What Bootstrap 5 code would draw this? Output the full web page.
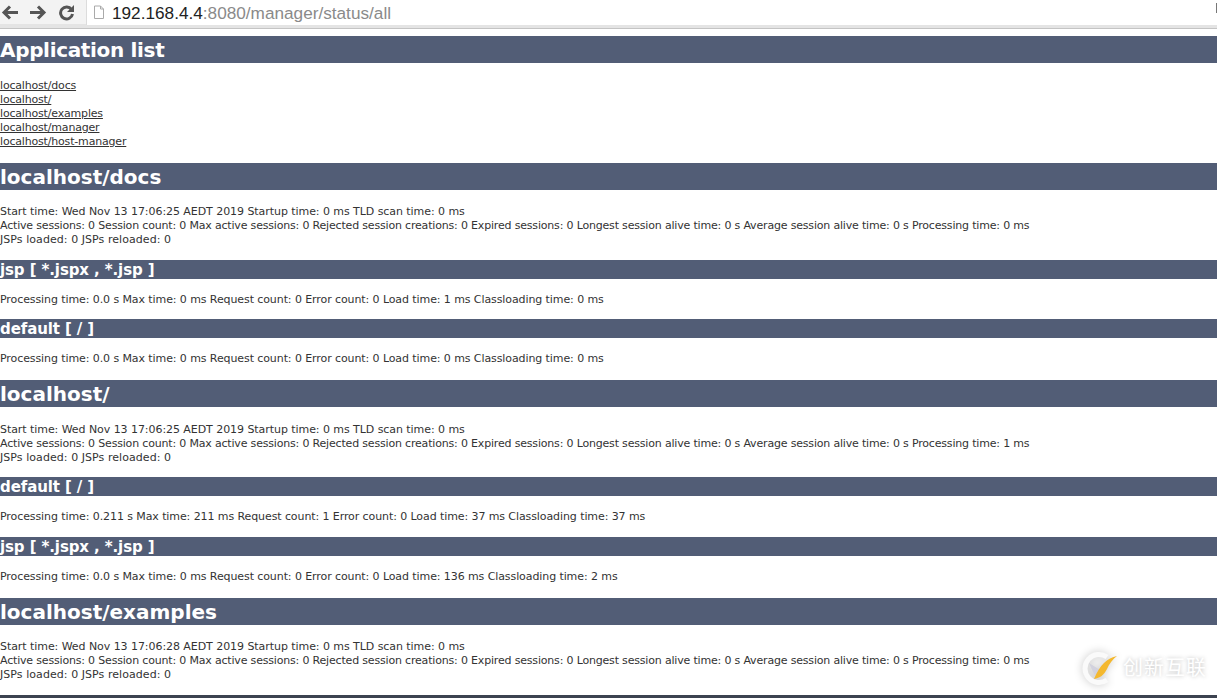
<!DOCTYPE html>
<html lang="en">
<head>
    <meta charset="UTF-8">
    <title>/manager</title>
    <link href="https://cdn.jsdelivr.net/npm/bootstrap@5.3.3/dist/css/bootstrap.min.css" rel="stylesheet">
    <style>
        html, body { height: 698px; overflow: hidden; }
        body { font-family: "DejaVu Sans", "Liberation Sans", sans-serif; font-size: 11px; line-height: 14px; letter-spacing: -.18px; color: #333; background: #fff; }
        .chrome-bar { height: 29px; background: #f3f3f3; border-bottom: 1px solid #c4c4c4; box-shadow: inset 0 -4px 0 #e4e4e4; letter-spacing: 0; }
        .chrome-btn { width: 20px; height: 25px; }
        .url-box { height: 25px; margin-left: 10px; padding-left: 6px; gap: 7px; background: #fff; border-left: 1px solid #dcdcdc; font-family: "Liberation Sans", sans-serif; font-size: 17.2px; line-height: 24px; color: #8a8a8a; }
        .url-host { color: #222; }
        .url-end { width: 1px; height: 10px; margin-top: 3px; background: #777; }
        .page-area { padding-top: 7px; }
        .head-lg, .head-sm { margin: 0; background: #525d76; color: #fff; font-family: "DejaVu Sans", sans-serif; font-weight: 700; }
        .head-lg { height: 27px; padding-top: 1px; font-size: 20px; line-height: 27px; letter-spacing: 0; }
        .head-app { letter-spacing: -.33px; }
        .head-sm { height: 19px; padding-top: 1px; font-size: 15px; line-height: 19px; letter-spacing: -.1px; }
        .list-block { margin: 16px 0 14px; }
        .list-block a { color: #333; display: block; }
        .info-block { margin: 15px 0 13px; }
        .info-mid { margin: 16px 0 12px; }
        .proc-line { margin: 14px 0 13px; letter-spacing: -.09px; }
        .proc-short { margin-bottom: 12px; }
        .proc-end { margin-bottom: 14px; }
        .line-start { letter-spacing: -.06px; }
        .line-jsp { letter-spacing: .06px; }
        .foot-edge { height: 3px; margin-top: 13px; background: #3c4350; }
        .mark-overlay { position: absolute; left: 1080px; top: 650px; width: 132px; height: 38px; }
        .mark-logo { filter: drop-shadow(0 0 4px #c4c4c4); }
        .mark-text { position: absolute; left: 43px; top: 3px; font-family: "Noto Sans CJK SC", sans-serif; font-size: 20px; line-height: 28px; letter-spacing: 1px; color: #fff; text-shadow: 0 0 4px #bdbdbd; white-space: nowrap; }
    </style>
</head>
<body>

<div class="chrome-bar d-flex">
    <div class="chrome-btn d-flex align-items-center justify-content-center">
        <svg width="18" height="15" viewBox="0 0 18 15"><path d="M17 7.500H3M9 1.500l-6 6 6 6" fill="none" stroke="#555" stroke-width="3"/></svg>
    </div>
    <div class="chrome-btn d-flex align-items-center justify-content-center ms-2">
        <svg width="18" height="15" viewBox="0 0 18 15"><path d="M1 7.500h14M9 1.500l6 6-6 6" fill="none" stroke="#555" stroke-width="3"/></svg>
    </div>
    <div class="chrome-btn d-flex align-items-center justify-content-center ms-2">
        <svg width="17" height="17" viewBox="0 0 17 17"><path d="M13.500 5.500A6 6 0 1 0 14.500 10" fill="none" stroke="#555" stroke-width="3"/><path d="M16 1v7H9z" fill="#555"/></svg>
    </div>
    <div class="url-box flex-grow-1 d-flex align-items-center">
        <svg width="12" height="15" viewBox="0 0 12 15"><path d="M1.500 1h6l3 3v9.500h-9zM7.500 1v3h3" fill="#fff" stroke="#aaa"/></svg>
        <span class="flex-grow-1"><span class="url-host">192.168.4.4</span>:8080/manager/status/all</span>
        <div class="url-end align-self-start"></div>
    </div>
</div>

<div class="page-area">
    <h1 class="head-lg head-app">Application list</h1>
    <div class="list-block">
        <a href="#">localhost/docs</a>
        <a href="#">localhost/</a>
        <a href="#">localhost/examples</a>
        <a href="#">localhost/manager</a>
        <a href="#">localhost/host-manager</a>
    </div>

    <h1 class="head-lg">localhost/docs</h1>
    <div class="info-block">
        <span class="line-start">Start time: Wed Nov 13 17:06:25 AEDT 2019 Startup time: 0 ms TLD scan time: 0 ms</span><br>
        Active sessions: 0 Session count: 0 Max active sessions: 0 Rejected session creations: 0 Expired sessions: 0 Longest session alive time: 0 s Average session alive time: 0 s Processing time: 0 ms<br>
        <span class="line-jsp">JSPs loaded: 0 JSPs reloaded: 0</span>
    </div>
    <h3 class="head-sm">jsp [ *.jspx , *.jsp ]</h3>
    <div class="proc-line proc-short">Processing time: 0.0 s Max time: 0 ms Request count: 0 Error count: 0 Load time: 1 ms Classloading time: 0 ms</div>
    <h3 class="head-sm">default [ / ]</h3>
    <div class="proc-line proc-end">Processing time: 0.0 s Max time: 0 ms Request count: 0 Error count: 0 Load time: 0 ms Classloading time: 0 ms</div>

    <h1 class="head-lg">localhost/</h1>
    <div class="info-mid">
        <span class="line-start">Start time: Wed Nov 13 17:06:25 AEDT 2019 Startup time: 0 ms TLD scan time: 0 ms</span><br>
        Active sessions: 0 Session count: 0 Max active sessions: 0 Rejected session creations: 0 Expired sessions: 0 Longest session alive time: 0 s Average session alive time: 0 s Processing time: 1 ms<br>
        <span class="line-jsp">JSPs loaded: 0 JSPs reloaded: 0</span>
    </div>
    <h3 class="head-sm">default [ / ]</h3>
    <div class="proc-line">Processing time: 0.211 s Max time: 211 ms Request count: 1 Error count: 0 Load time: 37 ms Classloading time: 37 ms</div>
    <h3 class="head-sm">jsp [ *.jspx , *.jsp ]</h3>
    <div class="proc-line proc-end">Processing time: 0.0 s Max time: 0 ms Request count: 0 Error count: 0 Load time: 136 ms Classloading time: 2 ms</div>

    <h1 class="head-lg">localhost/examples</h1>
    <div class="info-block">
        <span class="line-start">Start time: Wed Nov 13 17:06:28 AEDT 2019 Startup time: 0 ms TLD scan time: 0 ms</span><br>
        Active sessions: 0 Session count: 0 Max active sessions: 0 Rejected session creations: 0 Expired sessions: 0 Longest session alive time: 0 s Average session alive time: 0 s Processing time: 0 ms<br>
        <span class="line-jsp">JSPs loaded: 0 JSPs reloaded: 0</span>
    </div>
    <div class="foot-edge"></div>
</div>

<div class="mark-overlay">
    <svg class="mark-logo" width="40" height="38" viewBox="0 0 40 38">
        <path d="M27 7A14 14 0 1 0 27 30" fill="none" stroke="#fafafa" stroke-width="5"/>
        <path d="M9 13l11 7-5 6z" fill="#d2d2de"/>
        <path d="M37 6C27 8 20 15 14 29c6-1 10-4 13-10 2-5 6-10 10-13z" fill="#f4b82e"/>
    </svg>
    <span class="mark-text">创新互联</span>
</div>

<script src="https://cdn.jsdelivr.net/npm/bootstrap@5.3.3/dist/js/bootstrap.bundle.min.js"></script>
</body>
</html>
